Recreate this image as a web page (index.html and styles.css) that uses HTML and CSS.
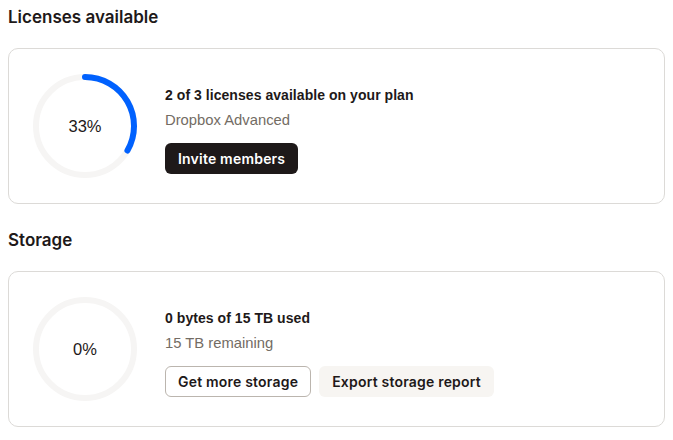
FILE: index.html
```html
<!DOCTYPE html>
<html lang="en">
<head>
<meta charset="utf-8">
<title>Admin console – Usage</title>
<link rel="stylesheet" href="styles.css">
</head>
<body>
  <section class="usage-section">
    <h2 class="section-title">Licenses available</h2>
    <div class="usage-card">
      <div class="ring">
        <svg class="ring-svg" viewBox="0 0 106 106" width="106" height="106" aria-hidden="true">
          <circle class="ring-track" cx="53" cy="53" r="49"></circle>
          <path class="ring-fill" d="M53 4 A49 49 0 0 1 95.44 77.5"></path>
        </svg>
        <span class="ring-label">33%</span>
      </div>
      <div class="usage-info">
        <p class="usage-title">2 of 3 licenses available on your plan</p>
        <p class="usage-sub">Dropbox Advanced</p>
        <div class="usage-actions">
          <button class="btn btn-primary" type="button">Invite members</button>
        </div>
      </div>
    </div>
  </section>

  <section class="usage-section">
    <h2 class="section-title">Storage</h2>
    <div class="usage-card">
      <div class="ring">
        <svg class="ring-svg" viewBox="0 0 106 106" width="106" height="106" aria-hidden="true">
          <circle class="ring-track" cx="53" cy="53" r="49"></circle>
        </svg>
        <span class="ring-label">0%</span>
      </div>
      <div class="usage-info">
        <p class="usage-title">0 bytes of 15 TB used</p>
        <p class="usage-sub">15 TB remaining</p>
        <div class="usage-actions">
          <button class="btn btn-outline" type="button">Get more storage</button>
          <button class="btn btn-subtle" type="button">Export storage report</button>
        </div>
      </div>
    </div>
  </section>
</body>
</html>
```

FILE: styles.css
```css
* {
  box-sizing: border-box;
}

body {
  margin: 0;
  padding: 5px 8px 0;
  background: #ffffff;
  color: #1e1919;
  font-family: "Liberation Sans", Arial, sans-serif;
}

.usage-section {
  margin-bottom: 24px;
}

.section-title {
  margin: 0 0 19px;
  font-family: Inter, "Liberation Sans", sans-serif;
  font-size: 17px;
  line-height: 24px;
  font-weight: 600;
  color: #1e1919;
}

.usage-card {
  display: flex;
  align-items: center;
  gap: 27px;
  height: 156px;
  padding: 0 23px;
  border: 1px solid #dcdad7;
  border-radius: 10px;
}

.ring {
  position: relative;
  width: 106px;
  height: 106px;
  flex: none;
}

.ring-svg {
  display: block;
}

.ring-track {
  fill: none;
  stroke: #f6f5f4;
  stroke-width: 6;
}

.ring-fill {
  fill: none;
  stroke: #0061fe;
  stroke-width: 6;
  stroke-linecap: round;
}

.ring-label {
  position: absolute;
  inset: 0;
  display: flex;
  align-items: center;
  justify-content: center;
  font-size: 16.5px;
  color: #1e1919;
}

.usage-info {
  display: flex;
  flex-direction: column;
  padding-top: 6px;
}

.usage-title {
  margin: 0;
  font-size: 14px;
  line-height: 20px;
  font-weight: 700;
  letter-spacing: 0.05px;
}

.usage-sub {
  margin: 5px 0 0;
  font-size: 14.8px;
  line-height: 20px;
  color: #736c64;
}

.usage-actions {
  display: flex;
  gap: 8px;
  margin-top: 13px;
}

.btn {
  height: 31px;
  padding: 0 12px;
  border-radius: 6px;
  font-family: Inter, "Liberation Sans", sans-serif;
  font-size: 14px;
  font-weight: 600;
  letter-spacing: 0.2px;
  border: 1px solid transparent;
  cursor: pointer;
}

.btn-primary {
  background: #1e1919;
  color: #ffffff;
}

.btn-outline {
  background: #ffffff;
  color: #1e1919;
  border-color: #bbb5ae;
}

.btn-subtle {
  background: #f7f5f2;
  color: #1e1919;
}
```
